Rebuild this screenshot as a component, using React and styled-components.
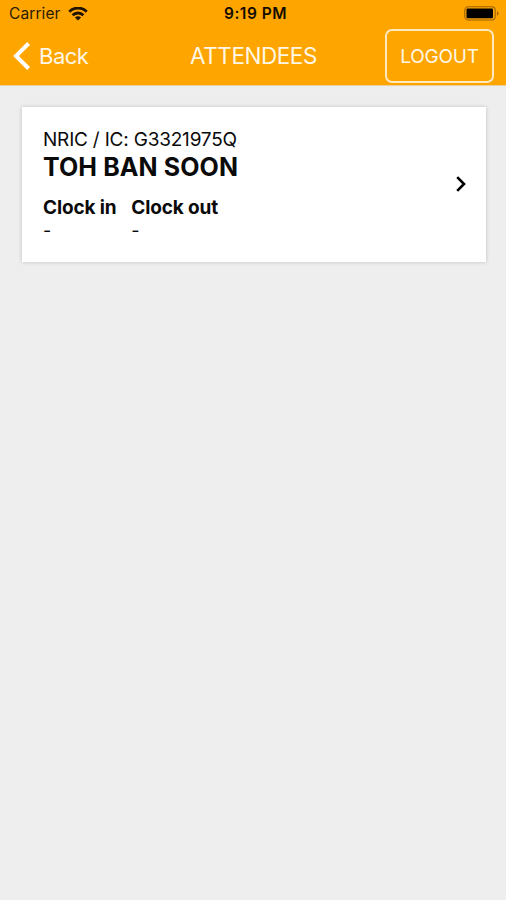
import React from 'react';
import styled, { createGlobalStyle } from 'styled-components';

const colors = {
  primary: '#ffa500',
  background: '#eeeeee',
  text: '#0a0a0a',
};

const GlobalStyle = createGlobalStyle`
  * {
    box-sizing: border-box;
  }
  body {
    margin: 0;
    background: ${colors.background};
    font-family: Inter, 'Liberation Sans', sans-serif;
  }
`;

const Screen = styled.div`
  width: 100%;
  min-height: 100vh;
  background: ${colors.background};
  color: ${colors.text};
`;

const Header = styled.header`
  height: 86px;
  background: ${colors.primary};
  border-bottom: 1px solid #e9cf9f;
`;

const StatusBar = styled.div`
  height: 28px;
  padding: 0 7px 0 9px;
  display: grid;
  grid-template-columns: 1fr auto 1fr;
  align-items: center;
  color: #2b1c00;
`;

const StatusSide = styled.div`
  display: flex;
  align-items: center;
  justify-content: ${(props) => (props.$end ? 'flex-end' : 'flex-start')};
  gap: 7px;
`;

const StatusText = styled.span`
  font-size: 15.5px;
  line-height: 28px;
  font-weight: 400;
  letter-spacing: 0.1px;
  white-space: nowrap;
`;

const Clock = styled(StatusText)`
  padding-left: 3px;
  color: #140d00;
  font-weight: 600;
  letter-spacing: 0.5px;
`;

const NavBar = styled.div`
  height: 57px;
  padding: 0 12px 1px 13px;
  display: grid;
  grid-template-columns: 1fr auto 1fr;
  align-items: center;
  color: #fff7e6;
`;

const BackButton = styled.button`
  display: flex;
  align-items: center;
  gap: 8px;
  padding: 0;
  border: 0;
  background: none;
  color: inherit;
  font-family: inherit;
  font-size: 22px;
  line-height: 28px;
  letter-spacing: -0.5px;
`;

const Title = styled.h1`
  margin: 0;
  font-size: 22.5px;
  line-height: 28px;
  font-weight: 400;
  letter-spacing: -0.45px;
`;

const LogoutButton = styled.button`
  justify-self: end;
  width: 109px;
  height: 54px;
  padding: 1px 0 0;
  border: 2px solid #ffe9bd;
  border-radius: 7px;
  background: none;
  color: inherit;
  font-family: inherit;
  font-size: 19px;
  line-height: 24px;
  letter-spacing: -0.25px;
`;

const List = styled.main`
  padding: 21px 20px 0 22px;
`;

const Card = styled.article`
  height: 155px;
  padding: 20px 20px 0 21px;
  display: flex;
  justify-content: space-between;
  background: #ffffff;
  box-shadow: 0 0 4px rgba(0, 0, 0, 0.2);
`;

const Identity = styled.div`
  font-size: 19px;
  line-height: 26px;
  letter-spacing: -0.2px;
  white-space: nowrap;
`;

const Name = styled.div`
  font-size: 25px;
  line-height: 28px;
  font-weight: 700;
  letter-spacing: 0.1px;
  white-space: nowrap;
`;

const Times = styled.div`
  margin-top: 15px;
  display: flex;
  gap: 15px;
`;

const TimeLabel = styled.div`
  font-size: 19px;
  line-height: 24px;
  font-weight: 700;
  letter-spacing: -0.15px;
  white-space: nowrap;
`;

const TimeValue = styled.div`
  font-size: 18px;
  line-height: 22px;
`;

const CardArrow = styled.div`
  height: 114px;
  display: flex;
  align-items: center;
`;

const WifiIcon = () => (
  <svg width="20" height="14" viewBox="0 0 20 14" fill="none" stroke="#211500" strokeWidth="2.9">
    <path d="M1.3 4.7C6.1 -0.1 13.9 -0.1 18.7 4.7" />
    <path d="M4.6 8.2C7.6 5.3 12.4 5.3 15.4 8.2" />
    <path d="M10 13.5L6.9 10.4C8.6 8.7 11.4 8.7 13.1 10.4Z" fill="#211500" stroke="none" />
  </svg>
);

const BatteryIcon = () => (
  <svg width="35" height="16" viewBox="0 0 35 16">
    <rect x="0.8" y="0.8" width="30.4" height="13.2" rx="3.5" fill="none" stroke="#996300" strokeWidth="1.1" />
    <rect x="2.5" y="2.5" width="26.5" height="9.8" rx="1" fill="#000000" />
    <path d="M33 5.2C35 6.2 35 8.8 33 9.8Z" fill="#996300" />
  </svg>
);

const BackIcon = () => (
  <svg width="18" height="29" viewBox="0 0 18 29" fill="none" stroke="#ffffff" strokeWidth="4">
    <path d="M15.6 1.5L3 14L15.6 26.5" />
  </svg>
);

const ArrowIcon = () => (
  <svg width="10" height="16" viewBox="0 0 10 16" fill="none" stroke="#000000" strokeWidth="2.6">
    <path d="M1.2 1.2L8 8L1.2 14.8" />
  </svg>
);

const TimeEntry = ({ label, value }) => (
  <div>
    <TimeLabel>{label}</TimeLabel>
    <TimeValue>{value}</TimeValue>
  </div>
);

const AttendeeCard = ({ nric, name, clockIn, clockOut }) => (
  <Card>
    <div>
      <Identity>NRIC / IC: {nric}</Identity>
      <Name>{name}</Name>
      <Times>
        <TimeEntry label="Clock in" value={clockIn} />
        <TimeEntry label="Clock out" value={clockOut} />
      </Times>
    </div>
    <CardArrow>
      <ArrowIcon />
    </CardArrow>
  </Card>
);

const attendees = [
  { nric: 'G3321975Q', name: 'TOH BAN SOON', clockIn: '-', clockOut: '-' },
];

const App = () => (
  <Screen>
    <GlobalStyle />
    <Header>
      <StatusBar>
        <StatusSide>
          <StatusText>Carrier</StatusText>
          <WifiIcon />
        </StatusSide>
        <Clock>9:19 PM</Clock>
        <StatusSide $end>
          <BatteryIcon />
        </StatusSide>
      </StatusBar>
      <NavBar>
        <BackButton>
          <BackIcon />
          Back
        </BackButton>
        <Title>ATTENDEES</Title>
        <LogoutButton>LOGOUT</LogoutButton>
      </NavBar>
    </Header>
    <List>
      {attendees.map((attendee) => (
        <AttendeeCard key={attendee.nric} {...attendee} />
      ))}
    </List>
  </Screen>
);

export default App;
